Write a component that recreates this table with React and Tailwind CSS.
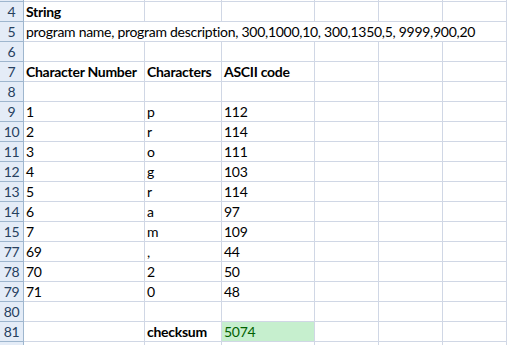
import React from 'react';

const rows = [
  { n: '4', cells: [{ v: 'String', b: true }] },
  { n: '5', span: 'program name, program description, 300,1000,10, 300,1350,5, 9999,900,20' },
  { n: '6', cells: [] },
  { n: '7', cells: [{ v: 'Character Number', b: true }, { v: 'Characters', b: true }, { v: 'ASCII code', b: true }] },
  { n: '8', cells: [] },
  { n: '9', cells: [{ v: '1' }, { v: 'p' }, { v: '112' }] },
  { n: '10', cells: [{ v: '2' }, { v: 'r' }, { v: '114' }] },
  { n: '11', cells: [{ v: '3' }, { v: 'o' }, { v: '111' }] },
  { n: '12', cells: [{ v: '4' }, { v: 'g' }, { v: '103' }] },
  { n: '13', cells: [{ v: '5' }, { v: 'r' }, { v: '114' }] },
  { n: '14', cells: [{ v: '6' }, { v: 'a' }, { v: '97' }] },
  { n: '15', cells: [{ v: '7' }, { v: 'm' }, { v: '109' }] },
  { n: '77', cells: [{ v: '69' }, { v: ',' }, { v: '44' }] },
  { n: '78', cells: [{ v: '70' }, { v: '2' }, { v: '50' }] },
  { n: '79', cells: [{ v: '71' }, { v: '0' }, { v: '48' }] },
  { n: '80', cells: [] },
  { n: '81', cells: [{ v: '' }, { v: 'checksum', b: true }, { v: '5074', good: true }] },
];

const head = 'h-5 border-r border-b border-[#9eb6ce] bg-[#e4ecf7] text-[#27415f] flex items-end justify-center pb-px leading-[17px]';
const cell = 'h-5 border-r border-b border-[#d0d7e5] flex items-end pl-[2px] pb-px leading-[17px] whitespace-nowrap overflow-visible';

function Strip({ h }) {
  return (
    <>
      <div className={`${h} border-r border-[#9eb6ce] bg-[#e4ecf7]`} />
      {[0, 1, 2, 3, 4, 5].map((i) => (
        <div key={i} className={`${h} border-r border-[#d0d7e5]`} />
      ))}
    </>
  );
}

export default function App() {
  return (
    <div className="w-[507px] h-[345px] overflow-hidden bg-white text-black text-[14px] tracking-[-0.28px]" style={{ fontFamily: 'Lato, "Open Sans", sans-serif' }}>
      <div className="grid grid-cols-[24px_121px_77px_93px_64px_64px_64px]">
        <div className="h-[2px] border-r border-b border-[#9eb6ce] bg-[#e4ecf7]" />
        {[0, 1, 2, 3, 4, 5].map((i) => (
          <div key={i} className="h-[2px] border-r border-b border-[#d0d7e5]" />
        ))}
        {rows.map((r) => (
          <React.Fragment key={r.n}>
            <div className={head}>{r.n}</div>
            {r.span ? (
              <div className={`${cell} col-span-6`}>{r.span}</div>
            ) : (
              [0, 1, 2, 3, 4, 5].map((i) => {
                const c = r.cells[i];
                return (
                  <div
                    key={i}
                    className={`${cell} ${c && c.b ? 'font-bold' : ''} ${c && c.good ? 'bg-[#c6efce] text-[#006100]' : ''}`}
                  >
                    {c ? c.v : ''}
                  </div>
                );
              })
            )}
          </React.Fragment>
        ))}
        <Strip h="h-[4px]" />
      </div>
    </div>
  );
}
